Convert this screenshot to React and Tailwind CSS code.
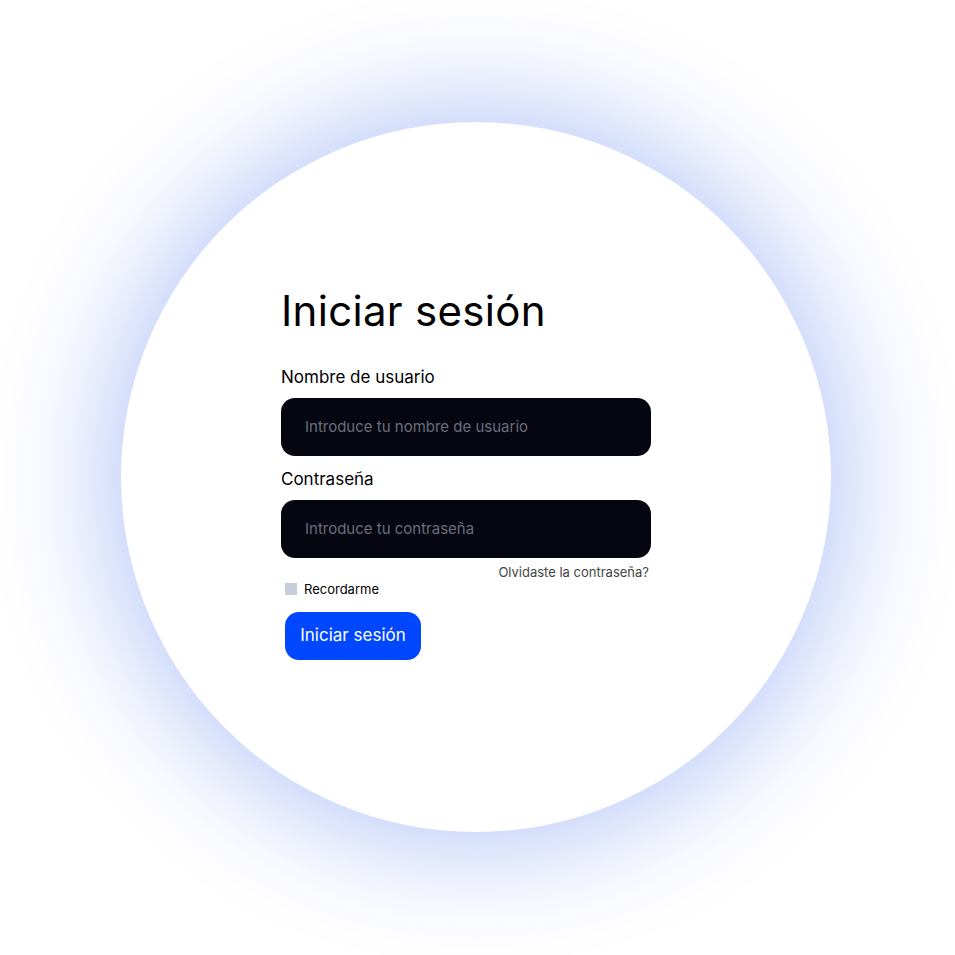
export default function App() {
  return (
    <div className="min-h-screen w-full bg-white flex items-center justify-center pr-[3px] pb-[1px]" style={{ fontFamily: "Inter, 'Noto Sans', sans-serif" }}>
      <div className="w-[710px] h-[710px] rounded-full bg-white shadow-[0_0_110px_20px_rgba(0,60,230,0.27)] flex items-center justify-center">
        <form className="w-[370px] flex flex-col -mt-[12px] -ml-[20px]">
          <h1 className="pt-[3px] text-[42px] leading-[50px] font-normal text-black tracking-[0.3px]">Iniciar sesión</h1>
          <label className="mt-[30px] text-[17px] leading-[22px] text-black">Nombre de usuario</label>
          <input
            className="mt-[10px] h-[58px] w-full rounded-[14px] bg-[#05060f] px-[24px] text-[15px] text-white placeholder:text-[#6b6f7d] outline-none"
            placeholder="Introduce tu nombre de usuario"
          />
          <label className="mt-[12px] text-[17px] leading-[22px] text-black">Contraseña</label>
          <input
            type="password"
            className="mt-[10px] h-[58px] w-full rounded-[14px] bg-[#05060f] px-[24px] text-[15px] text-white placeholder:text-[#6b6f7d] outline-none"
            placeholder="Introduce tu contraseña"
          />
          <div className="mt-[6px] flex justify-end pr-[2px]">
            <span className="text-[13px] leading-[16px] text-[#444]">Olvidaste la contraseña?</span>
          </div>
          <div className="mt-[1px] ml-[4px] flex items-center gap-[7px]">
            <span className="w-[12px] h-[12px] bg-[#c6ceda] inline-block" />
            <span className="text-[13px] leading-[16px] text-black">Recordarme</span>
          </div>
          <div className="mt-[15px] ml-[4px]">
            <button type="button" className="h-[48px] w-[136px] rounded-[14px] bg-[#0047ff] text-white text-[17px]">
              Iniciar sesión
            </button>
          </div>
        </form>
      </div>
    </div>
  );
}
